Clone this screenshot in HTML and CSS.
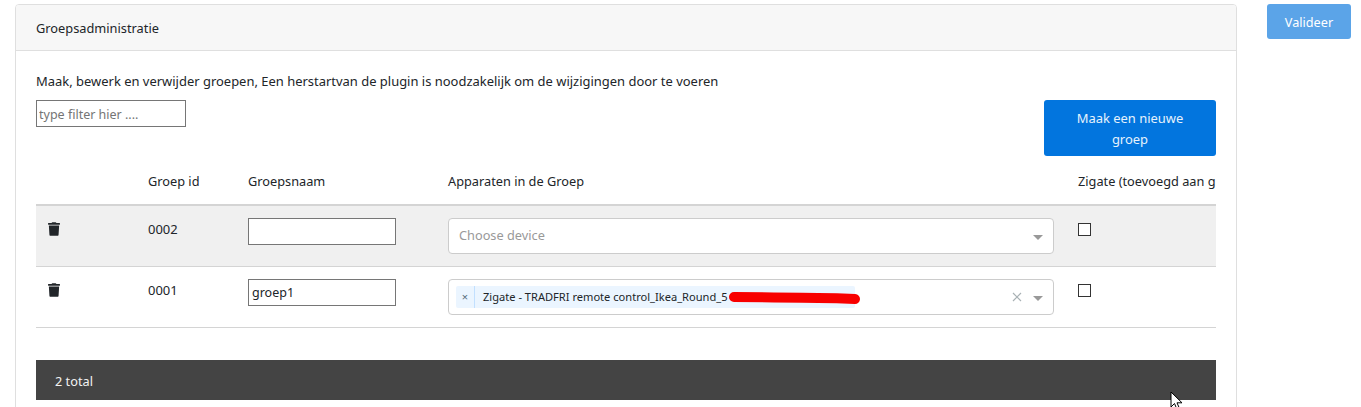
FILE: index.html
```html
<!DOCTYPE html>
<html lang="nl">
<head>
<meta charset="utf-8">
<title>Groepsadministratie</title>
<link rel="stylesheet" href="styles.css">
</head>
<body>
<div class="page">
  <section class="card">
    <header class="card-header">Groepsadministratie</header>
    <div class="card-body">
      <p class="intro">Maak, bewerk en verwijder groepen, Een herstartvan de plugin is noodzakelijk om de wijzigingen door te voeren</p>
      <div class="toolbar">
        <input class="filter" type="text" placeholder="type filter hier ....">
        <button class="btn btn-new" type="button">Maak een nieuwe groep</button>
      </div>
      <div class="table-wrap">
        <table class="groups">
          <colgroup>
            <col class="c-del"><col class="c-id"><col class="c-name"><col class="c-dev"><col class="c-zig">
          </colgroup>
          <thead>
            <tr><th></th><th>Groep id</th><th>Groepsnaam</th><th>Apparaten in de Groep</th><th>Zigate (toevoegd aan groep)</th></tr>
          </thead>
          <tbody>
            <tr class="shaded">
              <td><svg class="trash" viewBox="0 0 448 512"><path d="M432 32H312l-9.4-18.7A24 24 0 0 0 281.1 0H166.8a23.72 23.72 0 0 0-21.4 13.3L136 32H16A16 16 0 0 0 0 48v32a16 16 0 0 0 16 16h416a16 16 0 0 0 16-16V48a16 16 0 0 0-16-16zM53.2 467a48 48 0 0 0 47.9 45h245.8a48 48 0 0 0 47.9-45L416 128H32z"/></svg></td>
              <td class="id">0002</td>
              <td><input class="name" type="text"></td>
              <td>
                <div class="select">
                  <span class="placeholder">Choose device</span>
                  <span class="arrow"></span>
                </div>
              </td>
              <td><input class="check" type="checkbox"></td>
            </tr>
            <tr>
              <td><svg class="trash" viewBox="0 0 448 512"><path d="M432 32H312l-9.4-18.7A24 24 0 0 0 281.1 0H166.8a23.72 23.72 0 0 0-21.4 13.3L136 32H16A16 16 0 0 0 0 48v32a16 16 0 0 0 16 16h416a16 16 0 0 0 16-16V48a16 16 0 0 0-16-16zM53.2 467a48 48 0 0 0 47.9 45h245.8a48 48 0 0 0 47.9-45L416 128H32z"/></svg></td>
              <td class="id">0001</td>
              <td><input class="name" type="text" value="groep1"></td>
              <td>
                <div class="select">
                  <span class="chip">
                    <span class="chip-x">×</span>
                    <span class="chip-label">Zigate - TRADFRI remote control_Ikea_Round_5</span>
                    <svg class="scribble" viewBox="0 0 136 14"><path d="M6 6 C30 6 60 6.500 90 7 C105 7 118 7.500 127 8"/></svg>
                  </span>
                  <svg class="clear" viewBox="0 0 10 10"><path d="M1 1L9 9M9 1L1 9"/></svg>
                  <span class="arrow"></span>
                </div>
              </td>
              <td><input class="check" type="checkbox"></td>
            </tr>
          </tbody>
        </table>
      </div>
      <div class="total">2 total</div>
    </div>
  </section>
  <button class="btn btn-validate" type="button">Valideer</button>
</div>
<svg class="cursor" viewBox="0 0 14 20"><path d="M1 1V16L4.5 12.5L7 18.5L9.500 17.5L7 11.8H12Z"/></svg>
</body>
</html>
```
FILE: styles.css
```css
html, body {
  margin: 0;
  height: 100%;
  overflow: hidden;
  background: #fff;
}
body {
  font-family: "Noto Sans", "Open Sans", sans-serif;
  font-size: 12.96px;
  line-height: 20px;
  color: #212529;
  position: relative;
}
.page {
  display: flex;
  align-items: flex-start;
  gap: 30px;
  padding: 4px 10px 0 15px;
}
.card {
  width: 1222px;
  flex: none;
  box-sizing: border-box;
  border: 1px solid #dfdfdf;
  border-radius: 4px;
}
.card-header {
  height: 32px;
  padding: 13px 20px 0;
  background: #f7f7f7;
  border-bottom: 1px solid #dfdfdf;
  border-radius: 3px 3px 0 0;
  font-size: 12.8px;
}
.card-body {
  padding: 20px 20px 20px;
}
.intro {
  margin: 0;
  height: 29px;
}
.toolbar {
  display: flex;
  justify-content: space-between;
  align-items: flex-start;
}
.filter {
  width: 150px;
  height: 27px;
  box-sizing: border-box;
  border: 1px solid #767676;
  padding: 1px 2px 0;
  font-family: inherit;
  font-size: 12.5px;
  color: inherit;
  outline: none;
}
.filter::placeholder { color: #757575; }
.btn {
  border: 0;
  border-radius: 3px;
  color: #fff;
  font: inherit;
  text-align: center;
}
.btn-new {
  width: 172px;
  height: 56px;
  padding: 2px 24px 0;
  line-height: 21px;
  background: #0275de;
  color: #e6f2fc;
}
.btn-validate {
  flex: none;
  width: 84px;
  height: 35px;
  padding: 1px 0 0;
  background: #5ba4e8;
  font-size: 12.7px;
}
.table-wrap {
  overflow: hidden;
  width: 1180px;
}
.groups {
  table-layout: fixed;
  border-collapse: collapse;
  width: 1380px;
}
.c-del { width: 100px; }
.c-id { width: 100px; }
.c-name { width: 200px; }
.c-dev { width: 630px; }
.c-zig { width: 350px; }
.groups th {
  height: 49px;
  padding: 2px 12px 0;
  box-sizing: border-box;
  font-size: 12.75px;
  font-weight: 400;
  text-align: left;
  white-space: nowrap;
  border-bottom: 2px solid #d4d4d4;
}
.groups td {
  padding: 12px;
  height: 36px;
  vertical-align: top;
  border-bottom: 1px solid #d4d4d4;
}
.shaded { background: #f0f0f0; }
.trash {
  display: block;
  width: 12px;
  height: 14px;
  margin-top: 4px;
  fill: #212529;
}
.id { line-height: 22px; }
.name {
  display: block;
  width: 148px;
  height: 27px;
  box-sizing: border-box;
  border: 1px solid #767676;
  padding: 0 3px;
  font-family: inherit;
  font-size: 12.5px;
  color: #212529;
  outline: none;
  background: #fff;
}
.select {
  display: flex;
  align-items: center;
  height: 36px;
  box-sizing: border-box;
  border: 1px solid #ccc;
  border-radius: 4px;
  background: #fff;
  padding: 0 10px 0 7px;
}
.placeholder {
  flex: 1;
  padding: 0 0 2px 3px;
  color: #999;
  font-size: 12.75px;
}
.chip {
  position: relative;
  display: flex;
  width: 399px;
  height: 22px;
  align-items: center;
  background: #ebf5ff;
  border-radius: 2px;
  font-size: 11.1px;
  white-space: nowrap;
}
.chip-x {
  width: 18px;
  height: 22px;
  line-height: 22px;
  text-align: center;
  color: #5a7080;
  border-right: 1px solid #c2e0ff;
  flex: none;
}
.chip-label { padding-left: 8px; }
.scribble {
  position: absolute;
  left: 272px;
  top: 5px;
  width: 136px;
  height: 14px;
  fill: none;
  stroke: #f80000;
  stroke-width: 10;
  stroke-linecap: round;
}
.clear {
  width: 10px;
  height: 10px;
  margin-left: auto;
  margin-right: 1px;
  fill: none;
  stroke: #a9b2b5;
  stroke-width: 1.2;
}
.arrow {
  flex: none;
  width: 0;
  height: 0;
  margin-left: 10px;
  margin-top: 3px;
  border-style: solid;
  border-width: 5px 5px 0;
  border-color: #999 transparent transparent;
}
.check {
  display: block;
  appearance: none;
  width: 13px;
  height: 13px;
  margin: 5px 0 0;
  box-sizing: border-box;
  border: 1px solid #333;
  background: #fff;
  border-radius: 0;
}
.total {
  margin-top: 32px;
  height: 40px;
  background: #444;
  color: #f2f2f2;
  padding: 0 19px;
  line-height: 43px;
  font-size: 12.75px;
}
.cursor {
  position: absolute;
  left: 1170px;
  top: 391px;
  width: 14px;
  height: 20px;
  fill: #fff;
  stroke: #000;
  stroke-width: 1;
}
```
